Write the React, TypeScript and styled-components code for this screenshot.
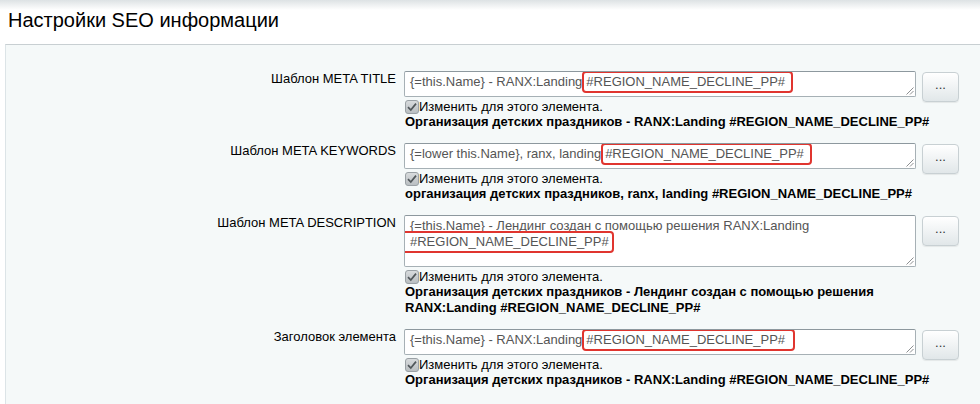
import React from 'react';
import styled, { createGlobalStyle } from 'styled-components';

const GlobalStyle = createGlobalStyle`
  body {
    margin: 0;
    background: #fff;
    font-family: 'Liberation Sans', Arial, Helvetica, sans-serif;
  }
`;

interface IField {
  label: string;
  text: string;
  tag: string;
  result: string;
  multi?: boolean;
  wrapTag?: boolean;
  padRight?: number;
}

const fields: IField[] = [
  {
    label: 'Шаблон META TITLE',
    text: '{=this.Name} - RANX:Landing',
    tag: '#REGION_NAME_DECLINE_PP#',
    result: 'Организация детских праздников - RANX:Landing #REGION_NAME_DECLINE_PP#',
    padRight: 6,
  },
  {
    label: 'Шаблон META KEYWORDS',
    text: '{=lower this.Name}, ranx, landing',
    tag: '#REGION_NAME_DECLINE_PP#',
    result: 'организация детских праздников, ranx, landing #REGION_NAME_DECLINE_PP#',
    padRight: 6,
  },
  {
    label: 'Шаблон META DESCRIPTION',
    text: '{=this.Name} - Лендинг создан с помощью решения RANX:Landing',
    tag: '#REGION_NAME_DECLINE_PP#',
    result:
      'Организация детских праздников - Лендинг создан с помощью решения RANX:Landing #REGION_NAME_DECLINE_PP#',
    multi: true,
    wrapTag: true,
    padRight: 3,
  },
  {
    label: 'Заголовок элемента',
    text: '{=this.Name} - RANX:Landing',
    tag: '#REGION_NAME_DECLINE_PP#',
    result: 'Организация детских праздников - RANX:Landing #REGION_NAME_DECLINE_PP#',
    padRight: 8,
  },
];

function CheckIcon() {
  return (
    <svg width='14' height='14' viewBox='0 0 14 14'>
      <defs>
        <linearGradient id='cbg' x1='0' y1='0' x2='0' y2='1'>
          <stop offset='0' stopColor='#d9dcde' />
          <stop offset='1' stopColor='#b8bdc0' />
        </linearGradient>
      </defs>
      <rect x='0.5' y='0.5' width='13' height='13' rx='2.5' fill='url(#cbg)' stroke='#9aa1a5' />
      <path d='M3 7.2 L5.8 10 L11 3.6' fill='none' stroke='#50575a' strokeWidth='1.7' />
    </svg>
  );
}

function Grip() {
  return (
    <GripMark width='9' height='9' viewBox='0 0 9 9'>
      <path d='M8.5 1.5 L1.5 8.5 M8.5 5 L5 8.5' stroke='#8c8f91' strokeWidth='1' />
    </GripMark>
  );
}

function App() {
  return (
    <Page>
      <GlobalStyle />
      <Header>
        <Title>Настройки SEO информации</Title>
      </Header>
      <Panel>
        {fields.map((f) => (
          <Row key={f.label}>
            <Label>{f.label}</Label>
            <Field>
              <InputLine>
                <FakeInput $multi={f.multi}>
                  {f.text}
                  {f.wrapTag ? ' ' : ''}
                  <Highlight $lead={f.wrapTag} $padRight={f.padRight ?? 6}>
                    {f.tag}
                  </Highlight>
                  <Grip />
                </FakeInput>
                <DotsButton>...</DotsButton>
              </InputLine>
              <CheckLine>
                <CheckIcon />
                <span>Изменить для этого элемента.</span>
              </CheckLine>
              <Result>{f.result}</Result>
            </Field>
          </Row>
        ))}
      </Panel>
    </Page>
  );
}

const Page = styled.div`
  width: 980px;
  height: 404px;
  overflow: hidden;
  background: #fff;
`;

const Header = styled.div`
  padding: 8px 8px 12px;
  background: linear-gradient(#dde2e4 0px, #fff 10px);
`;

const Title = styled.h1`
  margin: 0;
  font-size: 20px;
  line-height: 24px;
  font-weight: normal;
  color: #000;
`;

const Panel = styled.div`
  margin-left: 5px;
  padding-top: 26px;
  min-height: 400px;
  background: #f5f9f9;
  border-top: 1px solid #c8cfd2;
  border-left: 1px solid #dce4e7;
`;

const Row = styled.div`
  display: grid;
  grid-template-columns: 390px 555px;
  column-gap: 8px;
  padding-bottom: 13px;
`;

const Label = styled.div`
  text-align: right;
  font-size: 13px;
  line-height: 15px;
  color: #000;
`;

const Field = styled.div`
  display: flex;
  flex-direction: column;
`;

const InputLine = styled.div`
  display: flex;
  align-items: flex-start;
  gap: 6px;
`;

const FakeInput = styled.div<{ $multi?: boolean }>`
  position: relative;
  box-sizing: border-box;
  width: 512px;
  height: ${(p) => (p.$multi ? '52px' : '26px')};
  padding: 2px 5px;
  background: #fff;
  border: 1px solid #a6b0b5;
  border-top-color: #8d989e;
  border-radius: 2px;
  font-size: 13px;
  line-height: 16px;
  color: #555;
  overflow: hidden;
`;

const Highlight = styled.span<{ $lead?: boolean; $padRight: number }>`
  border: 2px solid #e0352f;
  border-radius: 4px;
  padding: 1px ${(p) => p.$padRight}px 2px ${(p) => (p.$lead ? '8px' : '2px')};
  margin-left: ${(p) => (p.$lead ? '-10px' : '0')};
`;

const GripMark = styled.svg`
  position: absolute;
  right: 1px;
  bottom: 1px;
`;

const DotsButton = styled.button`
  box-sizing: border-box;
  width: 37px;
  height: 30px;
  margin-top: 1px;
  margin-bottom: -5px;
  padding: 0 0 6px;
  border: 1px solid #c8d0d3;
  border-radius: 4px;
  background: linear-gradient(#ffffff, #e1e7e9);
  box-shadow: 0 1px 1px rgba(0, 0, 0, 0.07);
  font-family: 'Liberation Sans', Arial, sans-serif;
  font-size: 13px;
  font-weight: normal;
  color: #333;
`;

const CheckLine = styled.div`
  display: flex;
  align-items: center;
  margin-top: 2px;
  padding-left: 1px;
  height: 15px;
  font-size: 13px;
  line-height: 15px;
  color: #000;

  svg {
    flex: none;
  }
`;

const Result = styled.div`
  padding-left: 1px;
  font-size: 13px;
  line-height: 16px;
  font-weight: bold;
  color: #000;
`;

export default App;
